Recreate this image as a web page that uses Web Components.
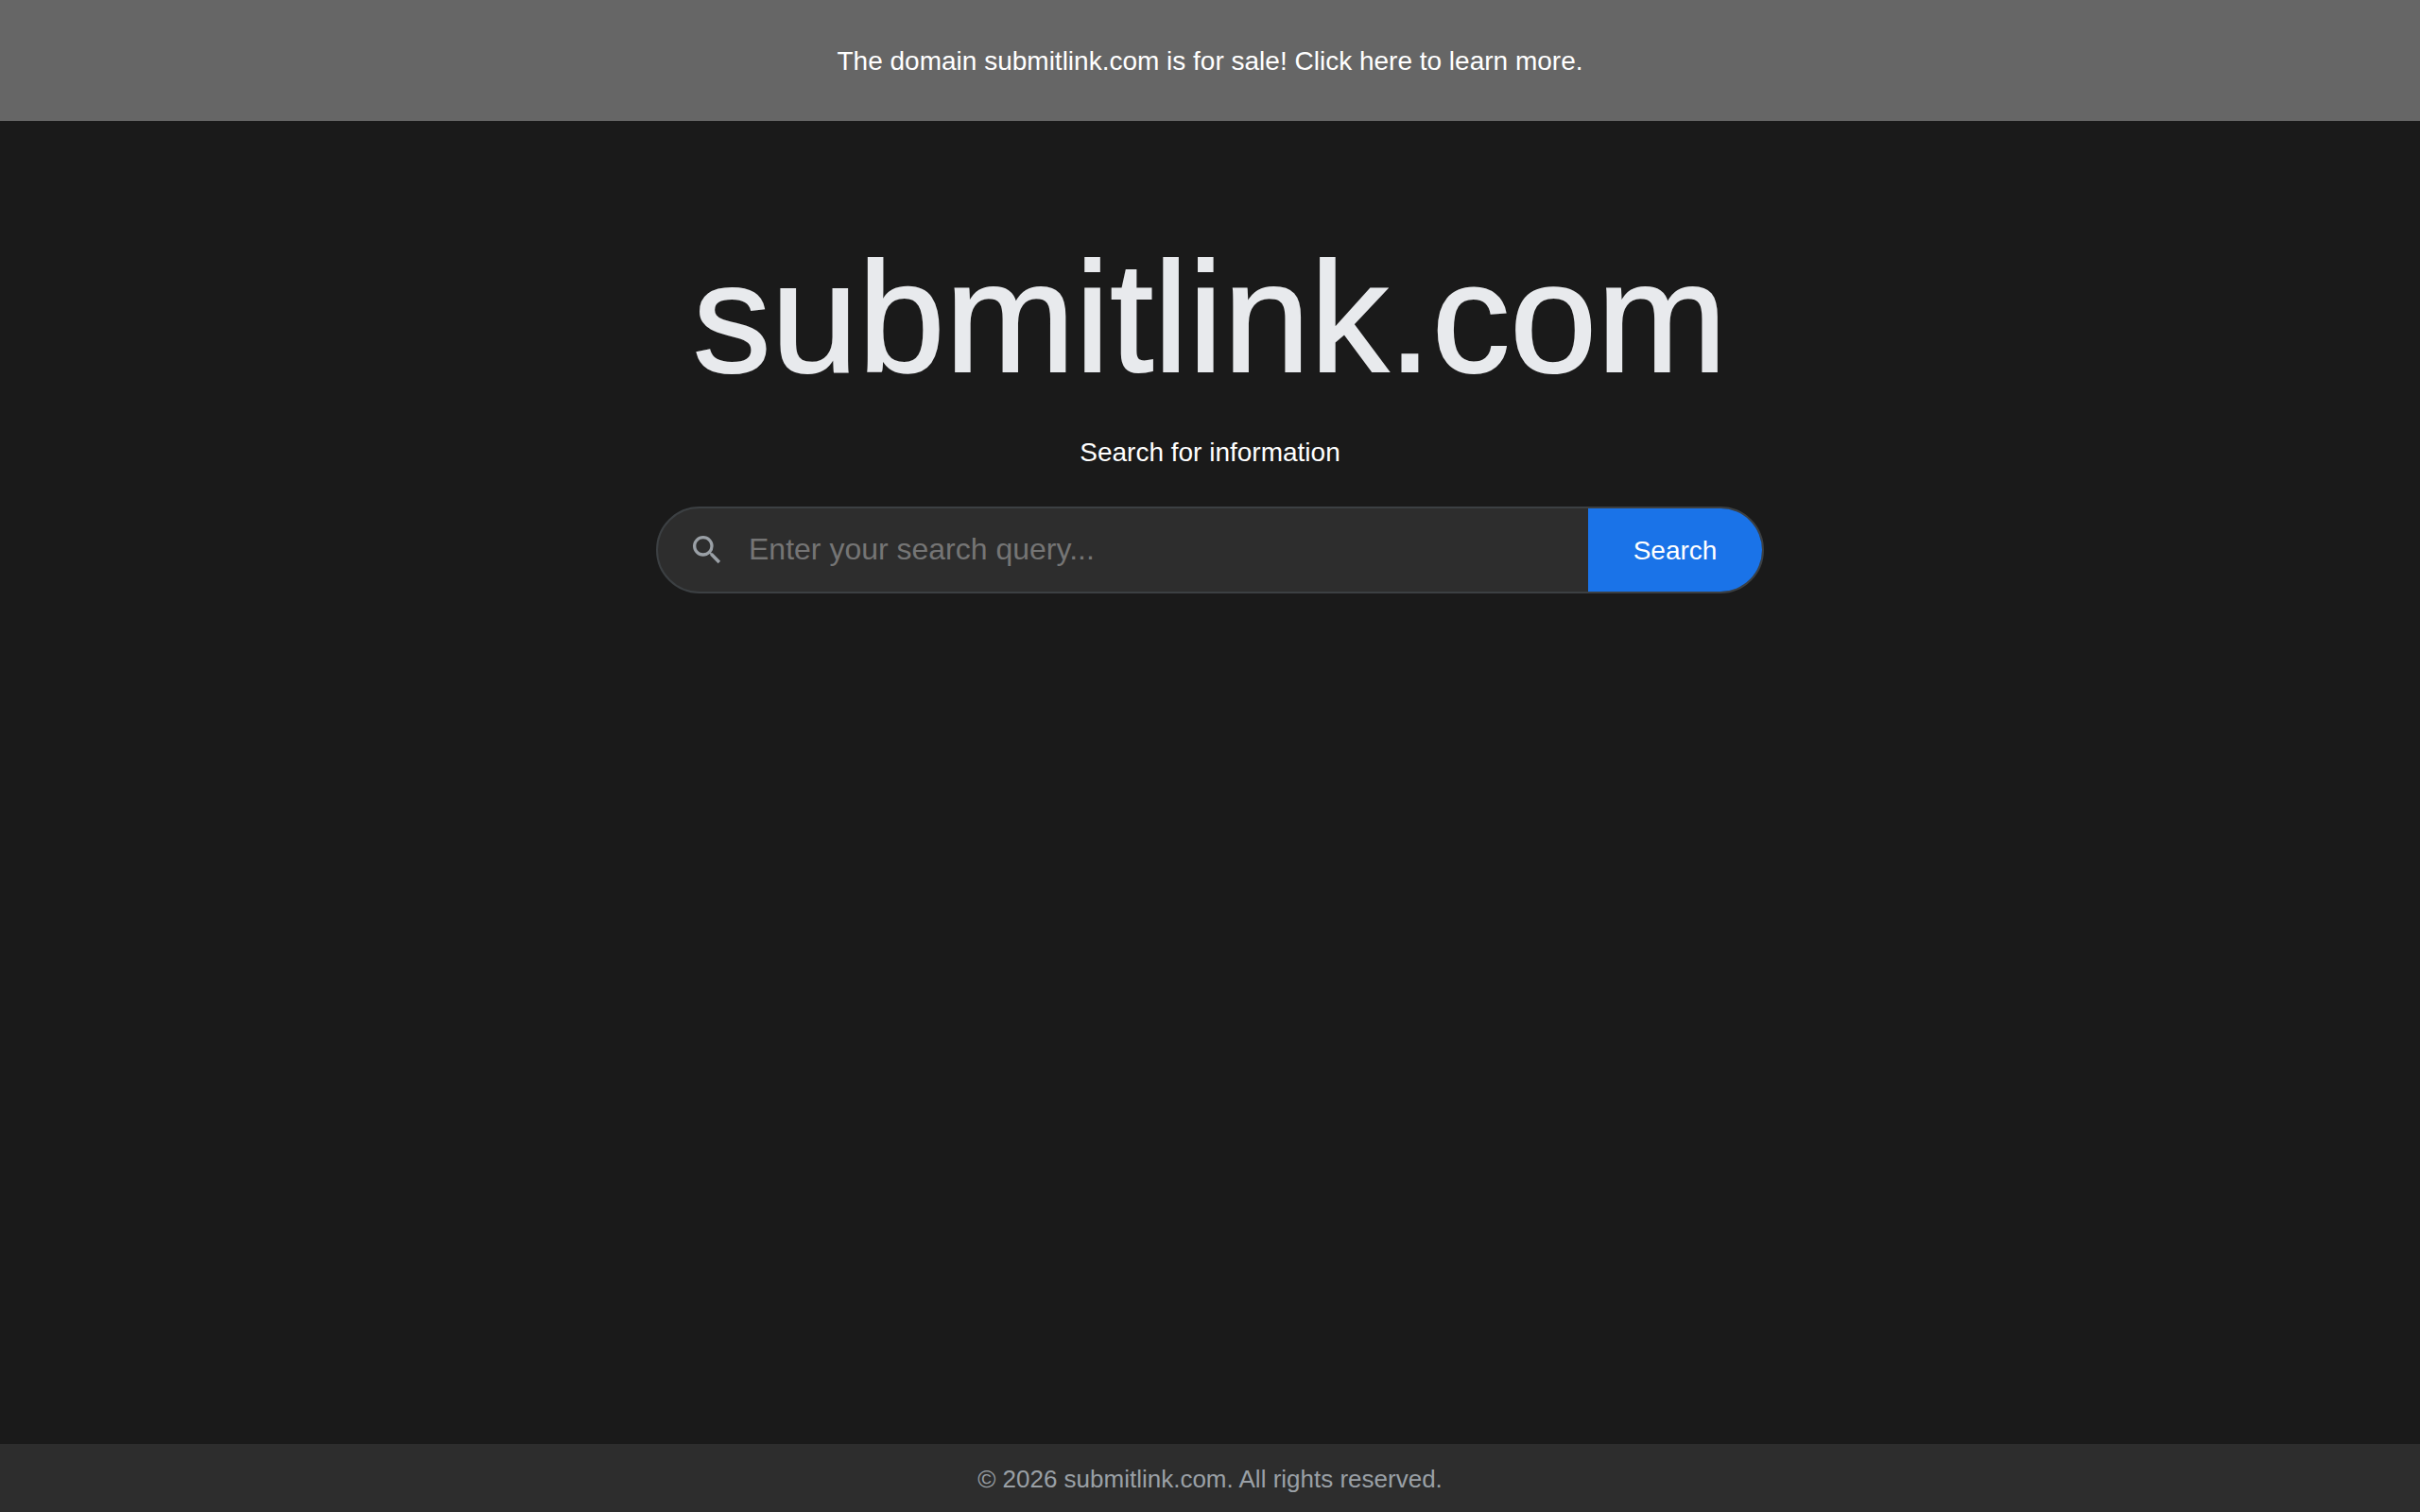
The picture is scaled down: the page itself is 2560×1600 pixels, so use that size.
<!DOCTYPE html>
<html lang="en">
<head>
<meta charset="utf-8">
<title>submitlink.com</title>
<style>
html, body { height: 100%; }
body {
    margin: 0;
    background: #1a1a1a;
    font-family: "Liberation Sans", Arial, sans-serif;
}
</style>
</head>
<body>
<sale-page>
    <sale-banner slot="banner">The domain submitlink.com is for sale! Click here to learn more.</sale-banner>
    <search-hero domain="submitlink.com" tagline="Search for information"></search-hero>
    <site-footer slot="footer">© 2026 submitlink.com. All rights reserved.</site-footer>
</sale-page>

<script>
class SalePage extends HTMLElement {
    constructor() {
        super();
        this.attachShadow({ mode: 'open' });
        this.shadowRoot.innerHTML = `
            <style>
                :host {
                    display: flex;
                    flex-direction: column;
                    height: 100vh;
                }
                main {
                    flex: 1;
                    display: flex;
                    flex-direction: column;
                    align-items: center;
                }
            </style>
            <slot name="banner"></slot>
            <main><slot></slot></main>
            <slot name="footer"></slot>
        `;
    }
}

class SaleBanner extends HTMLElement {
    constructor() {
        super();
        this.attachShadow({ mode: 'open' });
        this.shadowRoot.innerHTML = `
            <style>
                :host {
                    display: block;
                    height: 128px;
                    line-height: 130px;
                    background: #666666;
                    color: #ffffff;
                    font-size: 28px;
                    text-align: center;
                    cursor: pointer;
                }
            </style>
            <slot></slot>
        `;
    }
}

class SearchHero extends HTMLElement {
    constructor() {
        super();
        this.attachShadow({ mode: 'open' });
    }

    connectedCallback() {
        const domain = this.getAttribute('domain');
        const tagline = this.getAttribute('tagline');
        this.shadowRoot.innerHTML = `
            <style>
                :host {
                    display: flex;
                    flex-direction: column;
                    align-items: center;
                    padding-top: 112px;
                }
                h1 {
                    margin: 0;
                    font-size: 165px;
                    font-weight: 400;
                    letter-spacing: 0.2px;
                    line-height: 192px;
                    color: #e8eaed;
                    /* the stems of the reference are heavier than this font's */
                    -webkit-text-stroke: 2px #e8eaed;
                }
                p {
                    margin: 31px 0 41px;
                    font-size: 28px;
                    line-height: 32px;
                    color: #ffffff;
                }
            </style>
            <h1>${domain}</h1>
            <p>${tagline}</p>
            <search-box placeholder="Enter your search query..." label="Search"></search-box>
        `;
    }
}

class SearchBox extends HTMLElement {
    constructor() {
        super();
        this.attachShadow({ mode: 'open' });
    }

    connectedCallback() {
        this.shadowRoot.innerHTML = `
            <style>
                :host {
                    display: flex;
                    box-sizing: border-box;
                    width: 1172px;
                    height: 92px;
                    background: #2d2d2d;
                    border: 2px solid #3c4043;
                    border-radius: 46px;
                    overflow: hidden;
                }
                svg {
                    flex: none;
                    width: 40px;
                    height: 40px;
                    margin: 24px 0 0 32px;
                    fill: #9aa0a6;
                }
                input {
                    flex: 1;
                    min-width: 0;
                    margin: 0;
                    padding: 0 0 2px 24px;
                    border: 0;
                    outline: 0;
                    background: transparent;
                    color: #e8eaed;
                    font: 32px "Liberation Sans", Arial, sans-serif;
                }
                input::placeholder {
                    color: #757575;
                    opacity: 1;
                }
                button {
                    flex: none;
                    width: 184px;
                    padding: 2px 0 0;
                    border: 0;
                    background: #1a73e8;
                    color: #ffffff;
                    font: 28px "Liberation Sans", Arial, sans-serif;
                    cursor: pointer;
                }
            </style>
            <svg viewBox="0 0 24 24" aria-hidden="true">
                <path d="M15.5 14h-.79l-.28-.27A6.47 6.47 0 0 0 16 9.5 6.5 6.5 0 1 0 9.5 16c1.61 0 3.09-.59 4.23-1.57l.27.28v.79l5 4.99L20.49 19l-4.99-5zm-6 0C7.01 14 5 11.99 5 9.5S7.01 5 9.5 5 14 7.01 14 9.5 11.99 14 9.5 14z"/>
            </svg>
            <input type="text" placeholder="${this.getAttribute('placeholder')}">
            <button type="button">${this.getAttribute('label')}</button>
        `;
    }
}

class SiteFooter extends HTMLElement {
    constructor() {
        super();
        this.attachShadow({ mode: 'open' });
        this.shadowRoot.innerHTML = `
            <style>
                :host {
                    display: block;
                    height: 72px;
                    line-height: 74px;
                    background: #2d2d2d;
                    color: #9aa0a6;
                    font-size: 26px;
                    text-align: center;
                }
            </style>
            <slot></slot>
        `;
    }
}

customElements.define('sale-page', SalePage);
customElements.define('sale-banner', SaleBanner);
customElements.define('search-hero', SearchHero);
customElements.define('search-box', SearchBox);
customElements.define('site-footer', SiteFooter);
</script>
</body>
</html>
